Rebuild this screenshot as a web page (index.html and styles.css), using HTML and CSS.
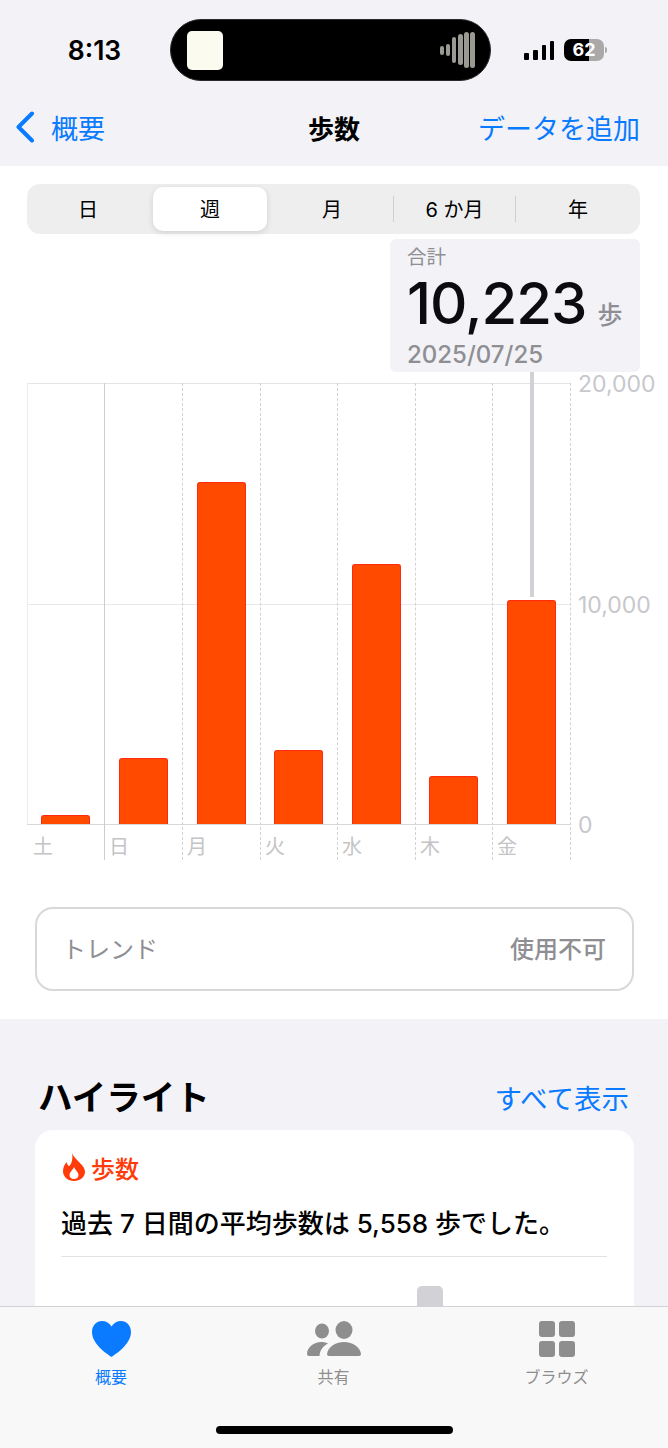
FILE: index.html
```html
<!DOCTYPE html>
<html lang="ja">
<head>
  <meta charset="UTF-8">
  <meta name="viewport" content="width=device-width, initial-scale=1.0">
  <title>歩数</title>
  <link rel="stylesheet" href="styles.css">
</head>
<body>
  <div class="phone">
    <header class="top">
      <div class="status">
        <span class="time">8:13</span>
        <div class="island">
          <div class="album"></div>
          <svg class="wave" width="35" height="36" viewBox="0 0 35 36">
            <g fill="#9a9a92">
              <rect x="0" y="14" width="4" height="9" rx="2"/>
              <rect x="6" y="12" width="4" height="12" rx="2"/>
              <rect x="12" y="5" width="4" height="26" rx="2"/>
              <rect x="18" y="2" width="5" height="31" rx="2.500"/>
              <rect x="24" y="0" width="5" height="36" rx="2.500"/>
              <rect x="30" y="0" width="5" height="36" rx="2.500"/>
            </g>
          </svg>
        </div>
        <div class="status-right">
          <svg width="30" height="19" viewBox="0 0 30 19">
            <g fill="#000">
              <rect x="0" y="12" width="5" height="7" rx="1"/>
              <rect x="9" y="9" width="5" height="10" rx="1"/>
              <rect x="18" y="4" width="4" height="15" rx="1"/>
              <rect x="26" y="0" width="4" height="19" rx="1"/>
            </g>
          </svg>
          <div class="battery"><span class="battery-num">62</span></div>
          <div class="battery-tip"></div>
        </div>
      </div>
      <nav class="nav">
        <a class="back">
          <svg width="20" height="32" viewBox="0 0 20 32"><path d="M17 2.500 3.500 16 17 29.500" fill="none" stroke="#0a7aff" stroke-width="4" stroke-linecap="round" stroke-linejoin="round"/></svg>
          <span>概要</span>
        </a>
        <h1 class="nav-title">歩数</h1>
        <a class="nav-add">データを追加</a>
      </nav>
    </header>

    <main class="main">
      <div class="segment">
        <span class="seg-item">日</span>
        <span class="seg-item seg-on">週</span>
        <span class="seg-item">月</span>
        <span class="seg-item seg-line">6 か月</span>
        <span class="seg-item seg-line">年</span>
      </div>

      <div class="chart">
        <div class="days">
          <div class="day"><div class="plot"><div class="bar" style="height:9px"></div></div><span class="day-name">土</span></div>
          <div class="day day-solid"><div class="plot"><div class="bar" style="height:66px"></div></div><span class="day-name">日</span></div>
          <div class="day"><div class="plot"><div class="bar" style="height:342px"></div></div><span class="day-name">月</span></div>
          <div class="day"><div class="plot"><div class="bar" style="height:74px"></div></div><span class="day-name">火</span></div>
          <div class="day"><div class="plot"><div class="bar" style="height:260px"></div></div><span class="day-name">水</span></div>
          <div class="day"><div class="plot"><div class="bar" style="height:48px"></div></div><span class="day-name">木</span></div>
          <div class="day day-last"><div class="plot"><div class="bar" style="height:224px"></div></div><span class="day-name">金</span></div>
        </div>
        <div class="y-labels">
          <span>20,000</span>
          <span>10,000</span>
          <span>0</span>
        </div>
        <div class="leader"></div>
        <div class="tip">
          <div class="tip-label">合計</div>
          <div class="tip-value">10,223<span class="tip-unit">歩</span></div>
          <div class="tip-date">2025/07/25</div>
        </div>
      </div>

      <div class="trend">
        <span>トレンド</span>
        <span class="trend-val">使用不可</span>
      </div>
    </main>

    <section class="highlights">
      <div class="hl-head">
        <h2>ハイライト</h2>
        <a>すべて表示</a>
      </div>
      <div class="card">
        <div class="card-title">
          <svg width="22" height="28" viewBox="0 0 22 28">
            <path fill-rule="evenodd" fill="#ff3b0a" d="M9 0C10 3 13 6 16 9 19 12 22 15 22 19 22 24 17 28 11 28 5 28 0 24 0 18 0 14 2 11 3.500 9 4 11 5 13 6.500 13 9 10 10 5 9 0ZM11 14C10 17 6.500 19 6.500 22 6.500 24.500 8.500 26 11 26 13.500 26 15.500 24.500 15.500 22 15.500 19 12 17 11 14Z"/>
          </svg>
          <span>歩数</span>
        </div>
        <p class="card-text">過去 7 日間の平均歩数は 5,558 歩でした。</p>
        <div class="mini-chart"><div class="mini-bar"></div></div>
      </div>
    </section>

    <footer class="tabbar">
      <div class="tabs">
        <div class="tab tab-on">
          <svg width="39" height="36" viewBox="0 0 39 36"><path fill="#0a7aff" d="M19.500 36C17 34 0 24 0 11 0 4.500 4.500 0 10 0c4 0 7.500 2 9.500 5.500C21.500 2 25 0 29 0c5.500 0 10 4.500 10 11 0 13-17 23-19.500 25Z"/></svg>
          <span>概要</span>
        </div>
        <div class="tab">
          <svg width="54" height="36" viewBox="0 0 54 36">
            <g fill="#8e8e8e">
              <ellipse cx="15" cy="10" rx="7" ry="7.500"/>
              <ellipse cx="37" cy="9" rx="8.500" ry="9"/>
              <path d="M0 33C0 26 7 21 14 21c3 0 5 .5 7 1.500C16 25 13 29 12.500 35H2c-1 0-2-1-2-2Z"/>
              <path d="M20 33C21 26 28 21 37 21s16 5 17 12c0 1-1 2-2 2H22c-1 0-2-1-2-2Z"/>
            </g>
          </svg>
          <span>共有</span>
        </div>
        <div class="tab">
          <div class="grid-icon"><i></i><i></i><i></i><i></i></div>
          <span>ブラウズ</span>
        </div>
      </div>
      <div class="home-bar"></div>
    </footer>
  </div>
</body>
</html>
```

FILE: styles.css
```css
*{
  margin: 0;
  padding: 0;
  box-sizing: border-box;
}
html,body{
  width: 668px;
  height: 1448px;
  overflow: hidden;
}
body{
  font-family: "Inter", "Noto Sans CJK JP", sans-serif;
  color: #000;
  background: #f2f2f7;
}
.phone{
  position: relative;
  width: 668px;
  height: 1448px;
  overflow: hidden;
}

/* header */
.top{
  height: 166px;
  background: #f2f2f7;
  padding-top: 19px;
}
.status{
  display: flex;
  align-items: center;
  height: 62px;
}
.time{
  width: 170px;
  padding-left: 19px;
  text-align: center;
  font-size: 26.500px;
  font-weight: 600;
}
.island{
  display: flex;
  align-items: center;
  justify-content: space-between;
  width: 321px;
  height: 62px;
  padding: 0 15px 0 16px;
  background: #000;
  border: 1px solid #2a2a2c;
  border-radius: 31px;
}
.album{
  width: 36px;
  height: 39px;
  background: #fbfbef;
  border-radius: 5px;
}
.status-right{
  display: flex;
  align-items: center;
  padding-left: 33px;
}
.battery{
  width: 40px;
  height: 22px;
  margin-left: 10px;
  border-radius: 7px;
  background: linear-gradient(90deg, #000 62%, #a9a9a9 62%);
  color: #fff;
  font-size: 18px;
  font-weight: 700;
  line-height: 22px;
  text-align: center;
}
.battery-tip{
  width: 2px;
  height: 6px;
  margin-left: 1px;
  background: #a9a9a9;
  border-radius: 0 2px 2px 0;
}
.nav{
  display: flex;
  align-items: center;
  justify-content: space-between;
  height: 56px;
  margin-top: 18px;
  padding: 0 28px 0 15px;
  position: relative;
  font-size: 27px;
  color: #0a7aff;
}
.back{
  display: flex;
  align-items: center;
  gap: 16px;
}
.nav-title{
  position: absolute;
  left: 0;
  right: 0;
  text-align: center;
  color: #000;
  font-size: 26px;
  font-weight: 600;
}

/* main white block */
.main{
  height: 853px;
  background: #fff;
  padding-top: 18px;
}
.segment{
  display: grid;
  grid-template-columns: 122px 122px 122px 122px 125px;
  align-items: center;
  width: 613px;
  height: 50px;
  margin-left: 27px;
  padding: 3px 0;
  background: #eeeeef;
  border-radius: 13px;
  font-size: 20px;
}
.seg-item{
  display: flex;
  align-items: center;
  justify-content: center;
  height: 100%;
  padding-bottom: 1px;
}
.seg-on{
  height: 44px;
  margin: 0 4px;
  background: #fff;
  border-radius: 10px;
  box-shadow: 0 2px 6px rgba(0,0,0,.12);
}
.seg-line{
  height: 26px;
  border-left: 1px solid #cfcfd1;
}

/* chart */
.chart{
  position: relative;
  display: flex;
  height: 476px;
  margin: 149px 0 0 27px;
}
.days{
  display: grid;
  grid-template-columns: 77px 78px 78px 77px 78px 77px 79px;
  width: 544px;
  height: 476px;
  background-image:
    linear-gradient(#e4e4e6, #e4e4e6),
    linear-gradient(#e9e9eb, #e9e9eb),
    linear-gradient(#d8d8da, #d8d8da);
  background-size: 100% 1px;
  background-repeat: no-repeat;
  background-position: 0 0, 0 221px, 0 441px;
}
.day{
  display: flex;
  flex-direction: column;
  border-left: 1px dashed #d2d2d4;
}
.day:first-child{
  border-left: 1px solid #ececee;
  height: 441px;
}
.day-solid{
  border-left: 1px solid #cdcdcf;
}
.day-last{
  border-right: 1px dashed #d2d2d4;
}
.plot{
  display: flex;
  align-items: flex-end;
  justify-content: center;
  height: 441px;
  flex: none;
  margin-left: -.5px;
}
.bar{
  width: 49px;
  background: #ff4a00;
  border: 1px solid #ff2a10;
  border-bottom: none;
  border-radius: 3px 3px 0 0;
}
.day-name{
  flex: none;
  padding: 10px 0 0 4px;
  font-size: 20px;
  line-height: 26px;
  color: #c4c4c6;
}
.day:first-child .day-name{
  padding-left: 5px;
}
.y-labels{
  display: flex;
  flex-direction: column;
  justify-content: space-between;
  height: 442px;
  padding: 1px 0 0 7px;
  font-size: 23px;
  line-height: 26px;
  color: #c7c7cc;
}
.y-labels span{
  height: 0;
  display: flex;
  align-items: center;
}
.leader{
  position: absolute;
  left: 503px;
  top: -12px;
  width: 4px;
  height: 226px;
  background: #d1d1d6;
}
.tip{
  position: absolute;
  left: 363px;
  top: -144px;
  width: 250px;
  height: 133px;
  padding: 5px 17px 0;
  background: #f2f2f7;
  border-radius: 6px;
}
.tip-label{
  font-size: 19.500px;
  line-height: 26px;
  color: #8e8e93;
}
.tip-value{
  padding-top: 1px;
  font-size: 58px;
  line-height: 64px;
  font-weight: 500;
  letter-spacing: -1px;
  color: #0c0c0e;
  white-space: nowrap;
}
.tip-unit{
  margin-left: 11px;
  font-size: 25px;
  font-weight: 500;
  letter-spacing: 0;
  color: #8e8e93;
}
.tip-date{
  margin-top: -8px;
  font-size: 24px;
  line-height: 32px;
  font-weight: 500;
  color: #8e8e93;
}

/* trend */
.trend{
  display: flex;
  align-items: center;
  justify-content: space-between;
  width: 599px;
  height: 84px;
  margin: 48px 0 0 35px;
  padding: 0 26px 3px 25px;
  border: 2px solid #d8d8da;
  border-radius: 18px;
  font-size: 24px;
  color: #8e8e93;
}
.trend-val{
  font-weight: 500;
}

/* highlights */
.highlights{
  padding: 0 34px 0 35px;
}
.hl-head{
  display: flex;
  align-items: center;
  justify-content: space-between;
  height: 111px;
  padding: 41px 5px 0 3px;
}
.hl-head h2{
  font-size: 34.500px;
  font-weight: 600;
}
.hl-head a{
  padding-top: 3px;
  font-size: 27.500px;
  color: #0a7aff;
}
.card{
  height: 300px;
  padding: 23px 27px 0 26px;
  background: #fff;
  border-radius: 18px;
}
.card-title{
  display: flex;
  align-items: center;
  gap: 6px;
  height: 28px;
  padding-left: 2px;
  font-size: 24px;
  font-weight: 500;
  color: #ff3b0a;
}
.card-text{
  height: 76px;
  padding-top: 26px;
  border-bottom: 1px solid #e2e2e4;
  font-size: 26px;
  font-weight: 500;
  line-height: 34px;
  white-space: nowrap;
}
.mini-chart{
  display: flex;
  padding: 29px 0 0 356px;
}
.mini-bar{
  width: 26px;
  height: 40px;
  background: #d1d1d6;
  border-radius: 5px 5px 0 0;
}

/* tab bar */
.tabbar{
  position: absolute;
  left: 0;
  right: 0;
  bottom: 0;
  height: 142px;
  background: #f8f8f8;
  border-top: 1px solid #d2d2d4;
}
.tabs{
  display: grid;
  grid-template-columns: 222px 223px 223px;
  padding-top: 14px;
}
.tab{
  display: flex;
  flex-direction: column;
  align-items: center;
  gap: 9px;
  font-size: 16px;
  line-height: 22px;
  color: #8e8e8e;
}
.tab-on{
  color: #0a7aff;
}
.grid-icon{
  display: grid;
  grid-template-columns: 16px 16px;
  grid-auto-rows: 16px;
  gap: 4px;
  height: 36px;
}
.grid-icon i{
  background: #8e8e8e;
  border-radius: 3px;
}
.home-bar{
  width: 237px;
  height: 8px;
  margin: 38px auto 0;
  background: #000;
  border-radius: 4px;
}
```
